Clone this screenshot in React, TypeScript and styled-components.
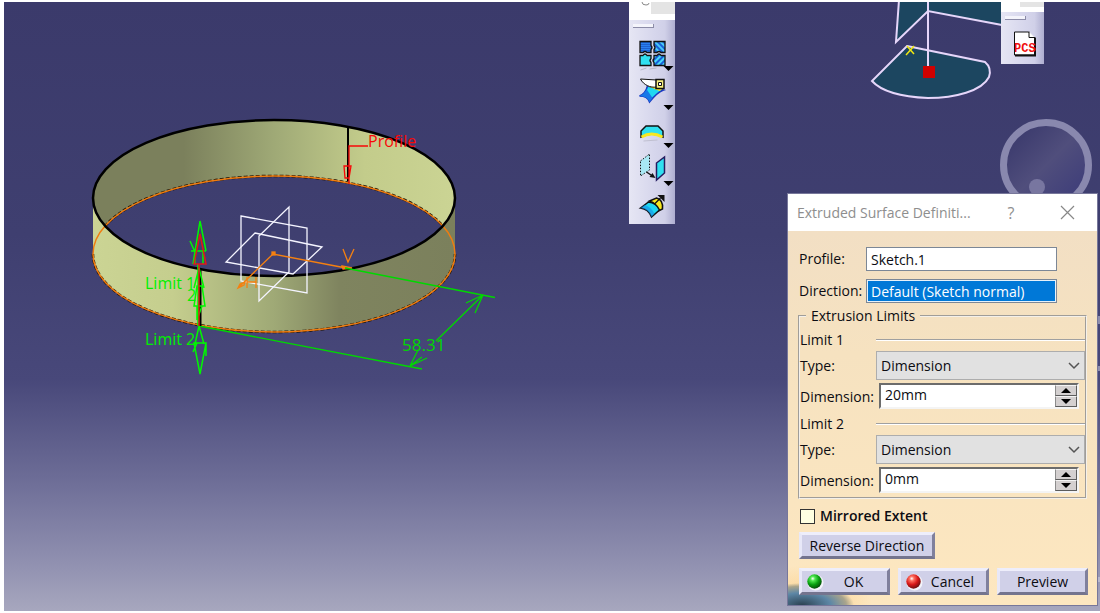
import React from "react";
import styled, { createGlobalStyle, css } from "styled-components";

const GlobalStyle = createGlobalStyle`
  * { box-sizing: border-box; }
  body { margin: 0; background: #fff; font-family: "Open Sans", "Noto Sans", sans-serif; font-size: 14px; line-height: 20px; color: #0c0c12; }
  input, select, button { font: inherit; color: inherit; }
`;

const Viewport = styled.main`
  position: relative;
  overflow: hidden;
  margin: 2px 0 2px 4px;
  min-height: calc(100vh - 4px);
  background: linear-gradient(#3b3a6b 0%, #3f3f70 38%, #48487a 62%, #6c6c96 78%, #9090b0 92%, #a7a7be 100%);
`;

const Scene = styled.svg`
  display: block;
  width: 100%;
  height: auto;
`;

const Toolbar = styled.nav<{ $left: string; $width: number }>`
  position: absolute;
  top: 0;
  left: ${(p) => p.$left};
  width: ${(p) => p.$width}px;
  display: flex;
  flex-direction: column;
  background: linear-gradient(90deg, #e6e6f4 0%, #d6d6ec 55%, #d0d0e8 78%, #aeaed0 100%);
`;

const ToolbarHead = styled.div<{ $height: number }>`
  height: ${(p) => p.$height}px;
  display: flex;
  justify-content: flex-end;
  background: #fff;
`;

const HeadClose = styled.div<{ $height: number }>`
  width: 24px;
  height: ${(p) => p.$height}px;
  background: #e4e4e4;
`;

const Grip = styled.div`
  width: 21px;
  height: 4px;
  margin: 4px;
  background: #f4f4fb;
  border-right: 1px solid #8c8ca8;
  border-bottom: 1px solid #8c8ca8;
`;

const ToolButton = styled.button<{ $height: number }>`
  width: 100%;
  height: ${(p) => p.$height}px;
  padding: 0;
  border: 0;
  background: none;
  svg { display: block; width: 100%; height: 100%; }
`;

const Dialog = styled.form`
  position: absolute;
  right: 2px;
  bottom: 5px;
  width: 311px;
  border: 1px solid #77779a;
  background:
    radial-gradient(ellipse 52px 22px at 14px 100%, #2c4252 0%, #5d87a6 55%, #a9a48c 85%, transparent 100%),
    radial-gradient(ellipse 64px 40px at 20px 100%, #fbd08a 0%, transparent 100%),
    linear-gradient(#f2dfc4 38px, #f6e2c0 160px, #fde7c0 100%);
`;

const TitleBar = styled.header`
  display: flex;
  align-items: center;
  height: 37px;
  padding: 0 18px 0 9px;
  background: #fff;
  color: #8e8e8e;
`;

const Title = styled.h1`
  flex: 1;
  margin: 0;
  font-size: 14px;
  font-weight: 400;
  white-space: nowrap;
`;

const TitleButton = styled.button`
  display: grid;
  place-items: center;
  width: 24px;
  height: 24px;
  padding: 0;
  border: 0;
  background: none;
  font-size: 16px;
  & + & { margin-left: 32px; }
`;

const Body = styled.div`
  display: flex;
  flex-direction: column;
  padding: 16px 9px 10px 11px;
`;

const References = styled.div`
  display: grid;
  gap: 8px;
  margin-bottom: 3px;
`;

const ReferenceRow = styled.div`
  display: grid;
  grid-template-columns: 67px 191px;
  align-items: center;
`;

const Field = styled.input<{ $selected?: boolean }>`
  width: 100%;
  height: 24px;
  padding: 0 4px;
  border: 1px solid #7c8796;
  border-radius: 0;
  background: #fff;
  ${(p) => p.$selected && css`
    background: #0078d7;
    color: #fff;
    box-shadow: inset 0 0 0 1px #e8f2fa;
  `}
`;

const Group = styled.fieldset`
  min-width: 0;
  margin: 0 1px 0 -1px;
  padding: 3px 0 0;
  border: 2px groove #f4f0ea;
`;

const Legend = styled.legend`
  margin-left: 6px;
  padding: 0 5px;
`;

const LimitHead = styled.div`
  display: flex;
  align-items: center;
  height: 22px;
`;

const LimitName = styled.span`
  width: 76px;
`;

const Rule = styled.span`
  flex: 1;
  height: 2px;
  border-top: 1px solid #a0a0a0;
  border-bottom: 1px solid #fff;
`;

const LimitRow = styled.div`
  display: grid;
  grid-template-columns: 76px minmax(0, 1fr);
  align-items: center;
`;

const SelectBox = styled.div`
  position: relative;
  svg { position: absolute; right: 5px; top: 11px; pointer-events: none; }
`;

const Select = styled.select`
  display: block;
  appearance: none;
  width: 100%;
  height: 29px;
  padding: 0 4px;
  border: 1px solid #adadad;
  border-radius: 0;
  background: #e1e1e1;
`;

const Spinner = styled.div`
  display: flex;
  height: 26px;
  margin: 3px 6px 4px 3px;
  border: 2px solid;
  border-color: #6c6c6c #f4f4f4 #f4f4f4 #6c6c6c;
  background: #fff;
`;

const SpinnerInput = styled.input`
  flex: 1;
  min-width: 0;
  padding: 0 4px 2px;
  border: 0;
  background: none;
`;

const Steps = styled.div`
  display: grid;
  flex: none;
  grid-template-rows: 1fr 1fr;
  width: 22px;
`;

const Step = styled.button`
  display: grid;
  place-items: center;
  padding: 0;
  border: 1px solid;
  border-color: #f4f4f4 #5c5c5c #5c5c5c #8c8c8c;
  background: #d4d0d0;
  svg { display: block; }
`;

const CheckLabel = styled.label`
  display: flex;
  align-items: center;
  gap: 5px;
  margin: 7px 0 6px 1px;
  font-weight: 600;
`;

const Check = styled.input`
  appearance: none;
  width: 15px;
  height: 15px;
  margin: 0;
  border: 1px solid #333;
  background: #ffffe1;
`;

const PushButton = styled.button<{ $width?: number }>`
  display: flex;
  align-items: center;
  justify-content: center;
  width: ${(p) => (p.$width ? p.$width + "px" : "auto")};
  height: 27px;
  padding: 0 4px;
  border: 3px solid;
  border-color: #eeeefb #80809c #74748e #e8e8f8;
  background: #d0d0e8;
  svg { flex: none; }
`;

const ButtonText = styled.span`
  flex: 1;
  text-align: center;
`;

const Actions = styled.footer`
  display: grid;
  grid-template-columns: repeat(3, 1fr);
  gap: 8px;
  margin-top: 9px;
`;

const Ball = ({ id, light, mid, dark }: { id: string; light: string; mid: string; dark: string }) => (
  <svg width="18" height="18" viewBox="0 0 18 18" aria-hidden="true">
    <defs>
      <radialGradient id={id} cx="0.38" cy="0.3" r="0.7">
        <stop offset="0" stopColor="#fff" />
        <stop offset="0.22" stopColor={light} />
        <stop offset="0.6" stopColor={mid} />
        <stop offset="1" stopColor={dark} />
      </radialGradient>
    </defs>
    <circle cx="9.500" cy="9.500" r="8" fill="#f4f4fa" />
    <circle cx="8.500" cy="8.500" r="7.200" fill={`url(#${id})`} />
  </svg>
);

const MenuArrow = () => <path d="M34 34h10l-5 5z" fill="#000" />;

const PatchesIcon = () => (
  <svg viewBox="0 0 45 40">
    <defs>
      <pattern id="dots" width="2" height="2" patternUnits="userSpaceOnUse"><rect width="2" height="2" fill="#2a80f0" /><rect width="1" height="1" fill="#1040b0" /></pattern>
      <pattern id="hatch" width="4" height="4" patternUnits="userSpaceOnUse" patternTransform="rotate(-45)"><rect width="4" height="4" fill="#48c8f8" /><rect width="2" height="4" fill="#1860d8" /></pattern>
      <pattern id="hatchUp" width="4" height="4" patternUnits="userSpaceOnUse" patternTransform="rotate(45)"><rect width="4" height="4" fill="#48d8f8" /><rect width="2" height="4" fill="#1860d8" /></pattern>
    </defs>
    <g stroke="#111" strokeWidth="1.300">
      <path d="M10.500 9.500h11v4q2 2 0 4v3h-4q-2-2-4 0h-3z" fill="url(#dots)" />
      <path d="M24.500 9.500h11v11h-4q-2-2-4 0h-3v-3q2-2 0-4z" fill="url(#hatch)" />
      <path d="M10.500 23.500h3q2-3 4 0h4v3q-2 2 0 4v3h-11z" fill="#30e0f0" />
      <path d="M24.500 23.500h3q2-3 4 0h4v10h-11v-3q-2-2 0-4z" fill="url(#hatchUp)" />
    </g>
    <path d="M11 38l6-2M20 37l7-1" stroke="#b8b8c8" />
    <MenuArrow />
  </svg>
);

const SplitIcon = () => (
  <svg viewBox="0 0 45 38">
    <path d="M10 24q6-2 8-10l16 4q-6 2-14 12-2-6-10-6z" fill="#20d8f0" stroke="#1c38c0" strokeWidth="1.500" />
    <path d="M10 24q5-2 7-7l6 9-3 4q-2-6-10-6z" fill="#1878e8" />
    <path d="M18 14l12 5 3-2-13-5z" fill="#f8e820" />
    <path d="M11 7l16 1v7c-6 1-13-2-16-8z" fill="#fff" stroke="#111" />
    <path d="M26.500 7.500h8v9h-8z" fill="#f8f080" stroke="#111" strokeWidth="1.500" />
    <path d="M29 10.500h3v3h-3z" fill="#fff" stroke="#111" />
    <path d="M34 33h10l-5 5z" fill="#000" />
  </svg>
);

const BoundaryIcon = () => (
  <svg viewBox="0 0 45 38">
    <path d="M11.500 27v-6l5-5h12l5 5v6q-11-6-22 0z" fill="#30e0f0" stroke="#111" strokeWidth="1.500" />
    <path d="M12 27q10-6 21 0" fill="none" stroke="#f8e820" strokeWidth="3" />
    <path d="M14 31l14-1" stroke="#c0c0d0" />
    <path d="M34 33h10l-5 5z" fill="#000" />
  </svg>
);

const TranslateIcon = () => (
  <svg viewBox="0 0 45 38">
    <path d="M11 13l9-7v16l-9 6z" fill="#a8e8f4" stroke="#111" strokeDasharray="1.500 1.500" />
    <path d="M27 15l8-6v16l-8 7z" fill="#30e0f0" stroke="#241c60" strokeWidth="1.500" />
    <path d="M17 24l6 4" stroke="#111" strokeWidth="1.500" />
    <path d="M26 30l-6-1 3-4z" fill="#111" />
    <path d="M34 33h10l-5 5z" fill="#000" />
  </svg>
);

const ExtrapolateIcon = () => (
  <svg viewBox="0 0 45 38">
    <path d="M20 15l7-3q7 2 6 11l-4 2q-2-8-9-10z" fill="#f8e820" stroke="#111" strokeWidth="1.500" />
    <path d="M11 22l8-6q8 1 11 8l-8 7q-3-8-11-9z" fill="#20d8f0" stroke="#111" strokeWidth="1.500" />
    <path d="M11 22l4-3q7 2 10 9l-3 3q-3-8-11-9z" fill="#1890e8" opacity="0.600" />
    <path d="M25 18q3-3 6-6" fill="none" stroke="#111" strokeWidth="1.300" />
    <path d="M28 9h7v7z" fill="#111" />
  </svg>
);

const PointsFileIcon = () => (
  <svg viewBox="0 0 43 37">
    <path d="M13.500 6.500h14l6 6v17h-20z" fill="#fff" stroke="#111" />
    <path d="M34 12v18H14" fill="none" stroke="#111" strokeWidth="2" />
    <path d="M28 6v6h6" fill="#fff" stroke="#111" />
    <text x="13" y="26" fontFamily="Liberation Mono, monospace" fontSize="12" fontWeight="700" fill="#f01010">PCS</text>
  </svg>
);

const Chevron = () => (
  <svg width="12" height="8" viewBox="0 0 12 8" aria-hidden="true">
    <path d="M1 1l5 5 5-5" fill="none" stroke="#555" strokeWidth="1.500" />
  </svg>
);

const Model = () => (
  <Scene viewBox="4 2 1096 609" role="img" aria-label="Extruded surface preview">
    <defs>
      <linearGradient id="back" gradientUnits="userSpaceOnUse" x1="93" x2="455" y1="0" y2="0">
        <stop offset="0" stopColor="#7b805c" />
        <stop offset="0.25" stopColor="#7b805c" />
        <stop offset="0.5" stopColor="#9fa976" />
        <stop offset="0.75" stopColor="#c3cc8b" />
        <stop offset="1" stopColor="#cbd494" />
      </linearGradient>
      <linearGradient id="front" gradientUnits="userSpaceOnUse" x1="93" x2="455" y1="0" y2="0">
        <stop offset="0" stopColor="#cbd494" />
        <stop offset="0.22" stopColor="#c5ce8e" />
        <stop offset="0.5" stopColor="#9fa976" />
        <stop offset="0.68" stopColor="#7f845f" />
        <stop offset="1" stopColor="#7b805c" />
      </linearGradient>
      <linearGradient id="lens" x1="0" y1="0" x2="1" y2="1">
        <stop offset="0.2" stopColor="#3f3e70" />
        <stop offset="0.5" stopColor="#504e7c" />
        <stop offset="0.8" stopColor="#42417a" />
      </linearGradient>
    </defs>

    <path d="M105 226A181 78 0 1 1 443 226A181 78 0 0 0 105 226Z" fill="url(#back)" />
    <path d="M93 198V254A181 78 0 0 0 455 254V198A181 78 0 0 1 93 198Z" fill="url(#front)" />
    <path d="M105 226A181 78 0 0 1 443 226" fill="none" stroke="#1c1408" strokeWidth="2.500" strokeDasharray="4 2" />
    <path d="M93 254A181 78 0 0 0 455 254" fill="none" stroke="#1c1408" strokeWidth="2.500" strokeDasharray="4 2" />
    <ellipse cx="274" cy="254" rx="181" ry="78" fill="none" stroke="#f07c10" strokeWidth="1.500" />
    <ellipse cx="274" cy="198" rx="181" ry="78" fill="none" stroke="#000" strokeWidth="2.500" />

    <g fill="none" stroke="#f4f4ff" strokeWidth="1.300">
      <path d="M241 216L307 228V293L241 281Z" />
      <path d="M255 233L322 247L293 274L226 262Z" />
      <path d="M289 207V272L259 301V236Z" />
    </g>

    <g fill="none" stroke="#f58010" strokeWidth="1.300">
      <path d="M238 288L273 254L346 268M238 288l2-4 5-2-1 3zM342 266l10 2-9 1z" />
      <path d="M343 249l5 13 6-13" />
      <path d="M247 277v11M256 277v11M247 282h9" />
      <rect x="272" y="252" width="3" height="3" fill="#f58010" />
    </g>

    <g fill="none" stroke="#00d800" strokeWidth="1.300">
      <path d="M345 268L495 297.500M199 326L422 369" />
      <path d="M483 295L436 341M418 350L410 366M483 295l-17 8M483 295l-8 18M410 366l17-8M410 366l12-9" />
    </g>
    <text x="402" y="351" fontSize="17" fill="#00d800">58.31</text>

    <path d="M348 127V181" stroke="#000" strokeWidth="2" />
    <g fill="none" stroke="#f80808" strokeWidth="1.300">
      <path d="M368 146H349V184M344 166h7l-2 12h-4z" />
    </g>
    <text x="368" y="147" fontSize="16" fill="#f80808">Profile</text>

    <path d="M200 268V326" stroke="#000" strokeWidth="3" />
    <g fill="none" stroke="#00f800" strokeWidth="1.500">
      <path d="M200 221L193 264M200 221L206 251M190 241l5 11M191 251h15M195 252v12M203 250v14M198 264V326M200 374L194 343h12zM195 344l4-18 5 18M193 352l4-9M206 344v12M194 288l5-20 5 20M194 306l3-20h5l3 20zM197 306v14l5-14" />
    </g>
    <path d="M200 234L194 264h12zM199 264V326" fill="none" stroke="#e01818" strokeWidth="1.500" />
    <g fontSize="16" fill="#00f000">
      <text x="145" y="289">Limit 1</text>
      <text x="187" y="301">2</text>
      <text x="145" y="345">Limit 2</text>
    </g>

    <g fill="#1c4660" stroke="#e6d6fa" strokeWidth="2">
      <path d="M899 0L896 42L928 11L1002 25V0" />
      <path d="M907 46L985 62Q992 68 989 77C982 91 955 98 928 98C905 97 882 92 872 81Z" />
      <path d="M928 0V68" />
    </g>
    <rect x="923" y="66" width="12" height="12" fill="#d00000" />
    <path d="M907 46l7 8M914 46l-8 9" stroke="#f0e810" strokeWidth="1.500" />

    <circle cx="1046" cy="165" r="42.500" fill="url(#lens)" stroke="#8988ae" strokeWidth="7" />
    <circle cx="1037" cy="187" r="8" fill="#7876a0" />
    <path d="M1096 316h4v8h-4zM1096 366h4v5h-4zM1096 577h4v5h-4z" fill="#d8d8e6" opacity="0.500" />
  </Scene>
);

const Limit = ({ n, value }: { n: number; value: string }) => (
  <section aria-label={`Limit ${n}`}>
    <LimitHead>
      <LimitName>Limit {n}</LimitName>
      <Rule />
    </LimitHead>
    <LimitRow>
      <label htmlFor={`type${n}`}>Type:</label>
      <SelectBox>
        <Select id={`type${n}`} defaultValue="Dimension">
          <option>Dimension</option>
        </Select>
        <Chevron />
      </SelectBox>
    </LimitRow>
    <LimitRow>
      <label htmlFor={`dimension${n}`}>Dimension:</label>
      <Spinner>
        <SpinnerInput id={`dimension${n}`} defaultValue={value} />
        <Steps>
          <Step type="button" aria-label="Increase">
            <svg width="10" height="5" viewBox="0 0 10 5"><path d="M0 5l5-5 5 5z" /></svg>
          </Step>
          <Step type="button" aria-label="Decrease">
            <svg width="10" height="5" viewBox="0 0 10 5"><path d="M0 0l5 5 5-5z" /></svg>
          </Step>
        </Steps>
      </Spinner>
    </LimitRow>
  </section>
);

export default function App() {
  return (
    <>
      <GlobalStyle />
      <Viewport>
        <Model />
        <Toolbar $left="57%" $width={46} aria-label="Surface operations">
          <ToolbarHead $height={18}>
            <svg width="10" height="6" viewBox="0 0 10 6" aria-hidden="true"><path d="M1 0q0 3 4 3 3 0 3-2" fill="none" stroke="#888" /></svg>
            <HeadClose $height={12} />
          </ToolbarHead>
          <Grip />
          <ToolButton $height={40} aria-label="Join"><PatchesIcon /></ToolButton>
          <ToolButton $height={38} aria-label="Split"><SplitIcon /></ToolButton>
          <ToolButton $height={38} aria-label="Boundary"><BoundaryIcon /></ToolButton>
          <ToolButton $height={38} aria-label="Translate"><TranslateIcon /></ToolButton>
          <ToolButton $height={38} aria-label="Extrapolate"><ExtrapolateIcon /></ToolButton>
        </Toolbar>
        <Toolbar $left="91%" $width={43} aria-label="Points">
          <ToolbarHead $height={10}><HeadClose $height={5} /></ToolbarHead>
          <Grip />
          <ToolButton $height={40} aria-label="Points from file"><PointsFileIcon /></ToolButton>
        </Toolbar>

        <Dialog onSubmit={(e) => e.preventDefault()}>
          <TitleBar>
            <Title>Extruded Surface Definiti...</Title>
            <TitleButton type="button" aria-label="Help">?</TitleButton>
            <TitleButton type="button" aria-label="Close">
              <svg width="15" height="15" viewBox="0 0 15 15"><path d="M1 1l13 13M14 1L1 14" stroke="#888" strokeWidth="1.200" /></svg>
            </TitleButton>
          </TitleBar>
          <Body>
            <References>
              <ReferenceRow>
                <label htmlFor="profile">Profile:</label>
                <Field id="profile" defaultValue="Sketch.1" />
              </ReferenceRow>
              <ReferenceRow>
                <label htmlFor="direction">Direction:</label>
                <Field id="direction" $selected defaultValue="Default (Sketch normal)" />
              </ReferenceRow>
            </References>
            <Group>
              <Legend>Extrusion Limits</Legend>
              <Limit n={1} value="20mm" />
              <Limit n={2} value="0mm" />
            </Group>
            <CheckLabel>
              <Check type="checkbox" />
              Mirrored Extent
            </CheckLabel>
            <PushButton type="button" $width={136}>Reverse Direction</PushButton>
            <Actions>
              <PushButton type="submit">
                <Ball id="green" light="#50e850" mid="#08a010" dark="#035008" />
                <ButtonText>OK</ButtonText>
              </PushButton>
              <PushButton type="button">
                <Ball id="red" light="#ff7060" mid="#d81818" dark="#701010" />
                <ButtonText>Cancel</ButtonText>
              </PushButton>
              <PushButton type="button">Preview</PushButton>
            </Actions>
          </Body>
        </Dialog>
      </Viewport>
    </>
  );
}
